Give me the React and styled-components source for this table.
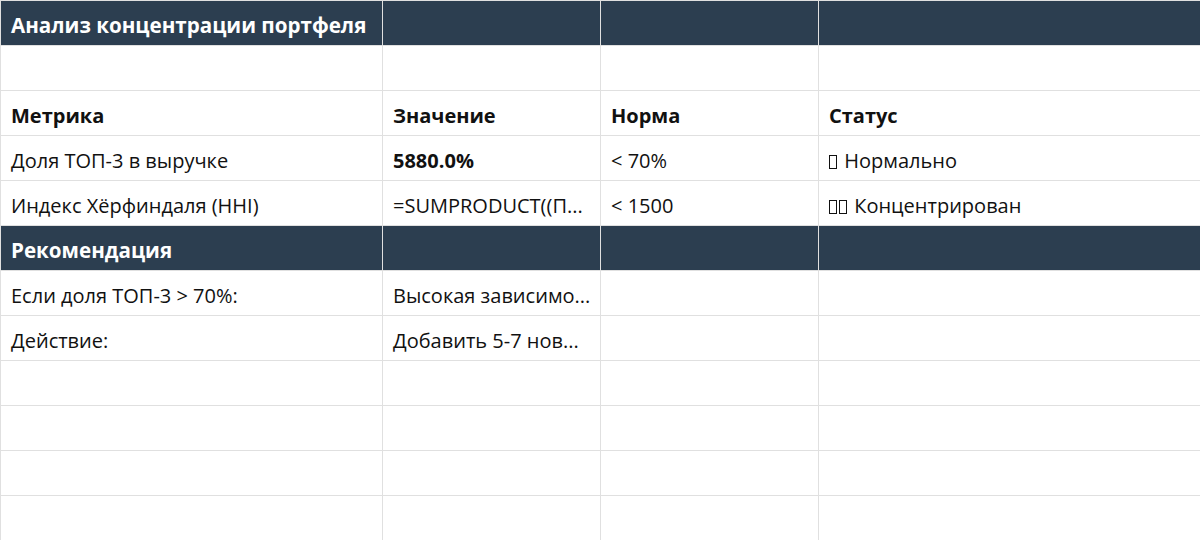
import React from "react";
import styled, { createGlobalStyle } from "styled-components";

const Global = createGlobalStyle`
  html, body { margin: 0; padding: 0; background: #ffffff; }
  body { font-family: "Open Sans", "Noto Sans", sans-serif; }
`;

const Sheet = styled.table`
  border-collapse: collapse;
  table-layout: fixed;
  width: 1200px;
  font-size: 20px;
  color: #111111;
`;

const Col = styled.col`
  width: ${(p) => p.$w}px;
`;

const Row = styled.tr`
  height: 45px;
  background: ${(p) => (p.$dark ? "#2c3e50" : "#ffffff")};
  color: ${(p) => (p.$dark ? "#ffffff" : "#111111")};
`;

const Cell = styled.td`
  border: 1px solid #e0e0e0;
  padding: 5px 10px 0 10px;
  height: 44px;
  box-sizing: border-box;
  white-space: nowrap;
  overflow: visible;
  font-weight: ${(p) => (p.$bold ? 700 : 400)};
  font-size: ${(p) => (p.$title ? "20.6px" : "20px")};
  vertical-align: middle;
  line-height: 1;
`;

const Tofu = styled.span`
  display: inline-block;
  width: 8px;
  height: 14px;
  border: 1.5px solid currentColor;
  box-sizing: border-box;
  margin-right: 2px;
  vertical-align: -1px;
`;

const rows = [
  { dark: true, cells: [{ t: "Анализ концентрации портфеля", b: true, title: true }, {}, {}, {}] },
  { cells: [{}, {}, {}, {}] },
  { cells: [{ t: "Метрика", b: true }, { t: "Значение", b: true }, { t: "Норма", b: true }, { t: "Статус", b: true }] },
  { cells: [{ t: "Доля ТОП-3 в выручке" }, { t: "5880.0%", b: true }, { t: "< 70%" }, { t: "Нормально", icons: 1 }] },
  { cells: [{ t: "Индекс Хёрфиндаля (HHI)" }, { t: "=SUMPRODUCT((П..." }, { t: "< 1500" }, { t: "Концентрирован", icons: 2 }] },
  { dark: true, cells: [{ t: "Рекомендация", b: true, title: true }, {}, {}, {}] },
  { cells: [{ t: "Если доля ТОП-3 > 70%:" }, { t: "Высокая зависимо..." }, {}, {}] },
  { cells: [{ t: "Действие:" }, { t: "Добавить 5-7 нов..." }, {}, {}] },
  { cells: [{}, {}, {}, {}] },
  { cells: [{}, {}, {}, {}] },
  { cells: [{}, {}, {}, {}] },
  { cells: [{}, {}, {}, {}] },
];

export default function App() {
  return (
    <>
      <Global />
      <Sheet>
        <colgroup>
          <Col $w={382} />
          <Col $w={218} />
          <Col $w={218} />
          <Col $w={382} />
        </colgroup>
        <tbody>
          {rows.map((r, i) => (
            <Row key={i} $dark={r.dark}>
              {r.cells.map((c, j) => (
                <Cell key={j} $bold={c.b} $title={c.title}>
                  {c.icons
                    ? Array.from({ length: c.icons }).map((_, k) => <Tofu key={k} />)
                    : null}
                  {c.icons ? " " : null}
                  {c.t || ""}
                </Cell>
              ))}
            </Row>
          ))}
        </tbody>
      </Sheet>
    </>
  );
}
